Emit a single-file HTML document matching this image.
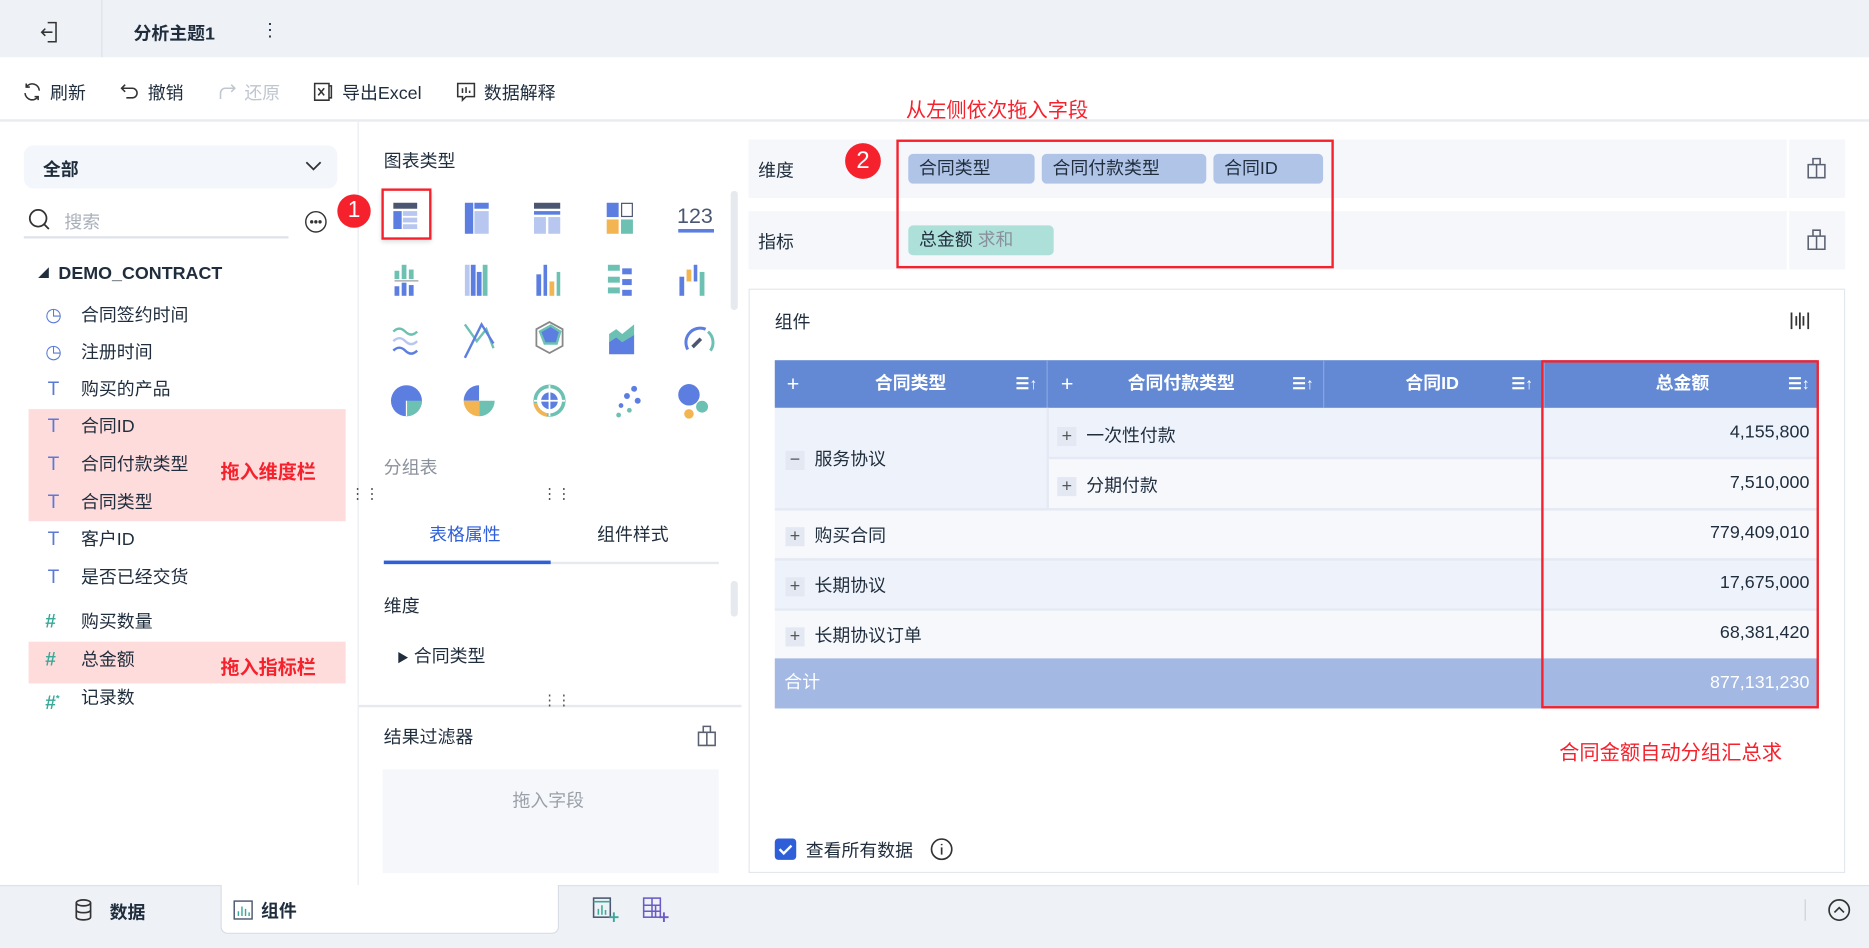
<!DOCTYPE html>
<html><head><meta charset="utf-8"><style>
html,body{margin:0;padding:0;width:1869px;height:947px;overflow:hidden;background:#fff}
#w{position:absolute;left:0;top:0;width:1568px;height:794px;transform:scale(1.19196,1.1927);transform-origin:0 0;font-family:"Liberation Sans","Noto Sans CJK SC",sans-serif;font-size:15px;color:#1f2d3d}
.a{position:absolute;white-space:nowrap}
.ic{position:absolute}
.red{color:#f5222d}
.chip{position:absolute;height:25px;line-height:25px;border-radius:4px;background:#b0c4e8;padding-left:9px;font-size:15px;box-sizing:border-box}
.row{position:absolute;left:650px;width:875px;height:42px;line-height:42px}
.pl{display:inline-block;width:16px;height:16px;line-height:15px;text-align:center;background:#e3e8f2;color:#555;font-size:15px;vertical-align:middle}
</style></head><body><div id="w">
<!-- top bar -->
<div class="a" style="left:0;top:0;width:1568px;height:48px;background:#eef1f6"></div>
<div class="a" style="left:85px;top:0;width:1px;height:48px;background:#dde2ea"></div>
<svg class="ic" style="left:33px;top:17px" width="18" height="20" viewBox="0 0 18 20" fill="none" stroke="#333" stroke-width="1.3"><path d="M7 2h7v16H7"/><path d="M11 10H2M5 7l-3 3 3 3"/></svg>
<div class="a" style="left:112px;top:17px;font-weight:bold;font-size:15px">分析主题1</div>
<div class="a" style="left:219px;top:16px">⋮</div>
<!-- toolbar -->
<div class="a" style="left:0;top:100px;width:1568px;height:2px;background:#e8ebf0"></div>
<svg class="ic" style="left:18px;top:68px" width="18" height="18" viewBox="0 0 18 18" fill="none" stroke="#333" stroke-width="1.3"><path d="M15 8A6 6 0 0 0 4 5M3 10a6 6 0 0 0 11 3"/><path d="M4 2v3h3M14 16v-3h-3"/></svg>
<div class="a" style="left:42px;top:67px">刷新</div>
<svg class="ic" style="left:100px;top:68px" width="18" height="18" viewBox="0 0 18 18" fill="none" stroke="#333" stroke-width="1.3"><path d="M5 3L2 6l3 3M2 6h9a4 4 0 0 1 0 8H6"/></svg>
<div class="a" style="left:124px;top:67px">撤销</div>
<svg class="ic" style="left:182px;top:68px" width="18" height="18" viewBox="0 0 18 18" fill="none" stroke="#c0c6cf" stroke-width="1.3"><path d="M12 3l3 3-3 3M15 6H7a4 4 0 0 0-4 4v5"/></svg>
<div class="a" style="left:205px;top:67px;color:#c0c6cf">还原</div>
<svg class="ic" style="left:262px;top:68px" width="18" height="18" viewBox="0 0 18 18" fill="none" stroke="#333" stroke-width="1.3"><path d="M2 2h12v14H2zM14 4h2v10h-2M5 6l5 6M10 6l-5 6"/></svg>
<div class="a" style="left:287px;top:67px">导出Excel</div>
<svg class="ic" style="left:382px;top:68px" width="18" height="18" viewBox="0 0 18 18" fill="none" stroke="#333" stroke-width="1.3"><path d="M2 2h14v11H9l-3 3v-3H2z M6 6v4M9 5v5M12 8v2"/></svg>
<div class="a" style="left:406px;top:67px">数据解释</div>
<div class="a red" style="left:760px;top:78px;font-size:17px">从左侧依次拖入字段</div>
<!-- left panel -->
<div class="a" style="left:300px;top:102px;width:1px;height:640px;background:#e8ebf0"></div>
<div class="a" style="left:20px;top:122px;width:263px;height:36px;border-radius:8px;background:#f3f6fb"></div>
<div class="a" style="left:36px;top:131px;font-weight:bold">全部</div>
<svg class="ic" style="left:255px;top:133px" width="16" height="12" viewBox="0 0 16 12" fill="none" stroke="#333" stroke-width="1.5"><path d="M2 3l6 6 6-6"/></svg>
<svg class="ic" style="left:23px;top:174px" width="20" height="20" viewBox="0 0 20 20" fill="none" stroke="#333" stroke-width="1.5"><circle cx="9" cy="9" r="7"/><path d="M14 14l4 4"/></svg>
<div class="a" style="left:54px;top:175px;color:#aab0ba">搜索</div>
<div class="a" style="left:20px;top:198px;width:222px;height:2px;background:#dfe3ea"></div>
<svg class="ic" style="left:255px;top:176px" width="20" height="20" viewBox="0 0 20 20" fill="none" stroke="#333" stroke-width="1.2"><circle cx="10" cy="10" r="8.5"/><circle cx="6.5" cy="10" r=".8" fill="#333"/><circle cx="10" cy="10" r=".8" fill="#333"/><circle cx="13.5" cy="10" r=".8" fill="#333"/></svg>
<div class="a" style="left:32px;top:222px;font-size:9px">◢</div>
<div class="a" style="left:49px;top:221px;font-weight:bold;font-size:15px">DEMO_CONTRACT</div>
<div class="a" style="left:24px;top:343px;width:266px;height:94px;background:#ffdcdc"></div>
<div class="a" style="left:24px;top:538px;width:266px;height:35px;background:#ffdcdc"></div>
<div class="a" style="left:38px;top:255px;color:#5a7ad6;line-height:20px;font-size:16px">
<div style="position:absolute;top:0">◷</div><div style="position:absolute;top:31px">◷</div>
<div style="position:absolute;top:62px;left:2px">T</div><div style="position:absolute;top:93px;left:2px">T</div><div style="position:absolute;top:125px;left:2px">T</div><div style="position:absolute;top:157px;left:2px">T</div><div style="position:absolute;top:188px;left:2px">T</div><div style="position:absolute;top:220px;left:2px">T</div>
<div style="position:absolute;top:257px;color:#3aa99a;font-weight:bold">#</div><div style="position:absolute;top:289px;color:#3aa99a;font-weight:bold">#</div><div style="position:absolute;top:321px;color:#3aa99a;font-weight:bold">#<sup style="font-size:8px">*</sup></div>
</div>
<div class="a" style="left:68px;top:255px;line-height:20px">
<div style="position:absolute;top:0">合同签约时间</div><div style="position:absolute;top:31px">注册时间</div><div style="position:absolute;top:62px">购买的产品</div><div style="position:absolute;top:93px">合同ID</div><div style="position:absolute;top:125px">合同付款类型</div><div style="position:absolute;top:157px">合同类型</div><div style="position:absolute;top:188px">客户ID</div><div style="position:absolute;top:220px">是否已经交货</div><div style="position:absolute;top:257px">购买数量</div><div style="position:absolute;top:289px">总金额</div><div style="position:absolute;top:321px">记录数</div>
</div>
<div class="a red" style="left:185px;top:382px;font-weight:bold;font-size:16px">拖入维度栏</div>
<div class="a red" style="left:185px;top:546px;font-weight:bold;font-size:16px">拖入指标栏</div>
<div class="a" style="left:294px;top:411px;font-size:12px;color:#555;line-height:6px">⋮⋮</div>
<!-- middle panel -->
<div class="a" style="left:322px;top:124px">图表类型</div>
<div class="a" style="left:320px;top:158px;width:38px;height:39px;border:2px solid #f5222d;box-shadow:0 2px 4px rgba(0,0,0,.15)"></div>
<div class="a" style="left:283px;top:163px;width:28px;height:28px;border-radius:50%;background:#f5222d;color:#fff;text-align:center;line-height:28px;font-size:19px">1</div>
<svg class="ic" style="left:322px;top:160px" width="290" height="200" viewBox="0 0 290 200">
<g transform="translate(8,10)"><rect width="20" height="5" fill="#4b5670"/><rect y="7" width="7" height="15" fill="#5b7ee0"/><rect x="8" y="7" width="12" height="4" fill="#b8c7f0"/><rect x="8" y="12.5" width="12" height="4" fill="#b8c7f0"/><rect x="8" y="18" width="12" height="4" fill="#b8c7f0"/></g>
<g transform="translate(68,10)"><rect width="7" height="26" fill="#5b7ee0"/><rect x="8" width="12" height="5" fill="#5b7ee0"/><rect x="8" y="7" width="12" height="19" fill="#b8c7f0"/></g>
<g transform="translate(126,10)"><rect width="22" height="5" fill="#4b5670"/><rect y="7" width="22" height="3" fill="#5b7ee0"/><rect y="12" width="10" height="14" fill="#b8c7f0"/><rect x="12" y="12" width="10" height="14" fill="#b8c7f0"/></g>
<g transform="translate(187,10)"><rect width="10" height="12" fill="#5b7ee0"/><rect x="12.5" y=".5" width="9" height="11" fill="none" stroke="#4b5670"/><rect y="14" width="10" height="12" fill="#f2b552"/><rect x="12" y="14" width="10" height="12" fill="#6cc1b2"/></g>
<text x="246" y="27" font-size="18" fill="#4b5670" font-family="Liberation Sans">123</text><rect x="247" y="32" width="30" height="3" fill="#5b7ee0"/>
<g transform="translate(9,62)" fill="#5b7ee0"><rect x="6" width="4" height="12" fill="#6cc1b2"/><rect y="5" width="4" height="7" fill="#6cc1b2"/><rect x="12" y="4" width="4" height="8" fill="#6cc1b2"/><rect y="13" width="20" height="1" fill="#999"/><rect y="18" width="4" height="8"/><rect x="6" y="15" width="4" height="11"/><rect x="12" y="17" width="4" height="9"/></g>
<g transform="translate(68,62)"><rect width="4" height="26" fill="#b8c7f0"/><rect x="5" width="4" height="26" fill="#5b7ee0"/><rect x="10" y="6" width="4" height="20" fill="#5b7ee0"/><rect x="15" width="4" height="26" fill="#6cc1b2"/></g>
<g transform="translate(128,62)"><rect y="8" width="4" height="18" fill="#5b7ee0"/><rect x="6" width="3" height="26" fill="#5b7ee0"/><rect x="11" y="14" width="4" height="12" fill="#f2b552"/><rect x="17" y="6" width="3" height="20" fill="#6cc1b2"/></g>
<g transform="translate(188,62)"><rect width="10" height="5" fill="#6cc1b2"/><rect x="12" y="3" width="8" height="5" fill="#5b7ee0"/><rect y="10" width="10" height="5" fill="#6cc1b2"/><rect x="12" y="12" width="8" height="5" fill="#5b7ee0"/><rect y="19" width="10" height="5" fill="#6cc1b2"/><rect x="12" y="21" width="8" height="5" fill="#5b7ee0"/></g>
<g transform="translate(248,62)"><rect y="10" width="4" height="16" fill="#5b7ee0"/><rect x="6" y="4" width="4" height="10" fill="#f2b552"/><rect x="12" width="3" height="14" fill="#5b7ee0"/><rect x="17" y="6" width="4" height="20" fill="#6cc1b2"/></g>
<g fill="none" stroke-width="2"><path d="M8 118q5-5 10 0t10 0" stroke="#6cc1b2"/><path d="M8 126q5-5 10 0t10 0" stroke="#b8c7f0"/><path d="M8 134q5-5 10 0t10 0" stroke="#5b7ee0"/>
<path d="M68 112l10 14 8-10 6 16" stroke="#6cc1b2"/><path d="M68 140l14-28 10 16" stroke="#5b7ee0"/>
<path d="M139 110l11 6v14l-11 6-11-6v-14z" stroke="#888" stroke-width="1.5"/><path d="M131 118l9-5 8 5-3 10h-10z" fill="#5b7ee0" stroke="#6cc1b2"/>
<path d="M189 120l6-4 5 4 10-8v10l-10 6-6-4-5 4z" fill="#6cc1b2" stroke="none"/><path d="M189 137v-10l6-4 5 4 10-6v16z" fill="#5b7ee0" stroke="none"/>
<path d="M255 133a12 12 0 0 1 15-17" stroke="#5b7ee0" stroke-width="2.5"/><path d="M272 118a12 12 0 0 1 2 16" stroke="#6cc1b2" stroke-width="2.5"/><path d="M259 131l7-7" stroke="#4b5670" stroke-width="3"/></g>
<circle cx="19" cy="176" r="13" fill="#5b7ee0"/><path d="M19 176h13a13 13 0 0 1-13 13z" fill="#6cc1b2"/><path d="M19 176v13" stroke="#fff"/>
<path d="M80 176v-13a13 13 0 0 0-13 13z" fill="#5b7ee0"/><path d="M80 176h13a13 13 0 0 0-13-13z" fill="#fff"/><path d="M80 176h13a13 13 0 0 1-13 13z" fill="#6cc1b2"/><path d="M80 176v13a13 13 0 0 1-13-13z" fill="#f2b552"/>
<circle cx="139" cy="176" r="12" fill="none" stroke="#6cc1b2" stroke-width="3"/><circle cx="139" cy="176" r="7" fill="#5b7ee0"/><path d="M126 176h26M139 163v26" stroke="#fff" stroke-width="1.5"/><path d="M127 178a12 12 0 0 0 10 10" stroke="#f2b552" stroke-width="3" fill="none"/>
<g fill="#5b7ee0"><circle cx="210" cy="166" r="2.5"/><circle cx="204" cy="172" r="2.5"/><circle cx="213" cy="176" r="2.5"/><circle cx="199" cy="180" r="2"/><circle cx="206" cy="184" r="2" fill="#6cc1b2"/><circle cx="197" cy="188" r="2" fill="#6cc1b2"/></g>
<circle cx="256" cy="171" r="9" fill="#5b7ee0"/><circle cx="267" cy="181" r="5" fill="#6cc1b2"/><circle cx="256" cy="187" r="4" fill="#f2b552"/>
</svg>
<div class="a" style="left:613px;top:160px;width:6px;height:100px;border-radius:3px;background:#e6e9ee"></div>
<div class="a" style="left:322px;top:381px;color:#8a919c">分组表</div>
<div class="a" style="left:455px;top:411px;font-size:12px;color:#555;line-height:6px">⋮⋮</div>
<div class="a" style="left:322px;top:471px;width:281px;height:2px;background:#e6e9ee"></div>
<div class="a" style="left:322px;top:470px;width:140px;height:3px;background:#2f5fd8"></div>
<div class="a" style="left:360px;top:437px;color:#2f5fd8">表格属性</div>
<div class="a" style="left:501px;top:437px">组件样式</div>
<div class="a" style="left:613px;top:487px;width:6px;height:30px;border-radius:3px;background:#e6e9ee"></div>
<div class="a" style="left:322px;top:497px">维度</div>
<div class="a" style="left:333px;top:539px"><span style="font-size:10px">▶</span> 合同类型</div>
<div class="a" style="left:301px;top:582px;width:321px;height:10px;background:#fff;overflow:hidden"></div>
<div class="a" style="left:301px;top:591px;width:321px;height:2px;background:#e6e9ee"></div>
<div class="a" style="left:455px;top:584px;font-size:12px;color:#555;line-height:6px">⋮⋮</div>
<div class="a" style="left:322px;top:607px">结果过滤器</div>
<svg class="ic" style="left:584px;top:607px" width="18" height="20" viewBox="0 0 18 20" fill="none" stroke="#5a6170" stroke-width="1.3"><path d="M6 2h6v5H6zM2 7h14v11H2zM9 7v11"/></svg>
<div class="a" style="left:321px;top:645px;width:282px;height:87px;background:#f5f7fb"></div>
<div class="a" style="left:430px;top:660px;color:#9aa0a9">拖入字段</div>
<!-- right area -->
<div class="a" style="left:628px;top:117px;width:920px;height:49px;background:#f5f7fb"></div>
<div class="a" style="left:628px;top:177px;width:920px;height:49px;background:#f5f7fb"></div>
<div class="a" style="left:1499px;top:117px;width:2px;height:49px;background:#fff"></div>
<div class="a" style="left:1499px;top:177px;width:2px;height:49px;background:#fff"></div>
<svg class="ic" style="left:1515px;top:131px" width="18" height="20" viewBox="0 0 18 20" fill="none" stroke="#5a6170" stroke-width="1.3"><path d="M6 2h6v5H6zM2 7h14v11H2zM9 7v11"/></svg>
<svg class="ic" style="left:1515px;top:191px" width="18" height="20" viewBox="0 0 18 20" fill="none" stroke="#5a6170" stroke-width="1.3"><path d="M6 2h6v5H6zM2 7h14v11H2zM9 7v11"/></svg>
<div class="a" style="left:636px;top:132px">维度</div>
<div class="a" style="left:636px;top:192px">指标</div>
<div class="chip" style="left:762px;top:129px;width:106px">合同类型</div>
<div class="chip" style="left:874px;top:129px;width:138px">合同付款类型</div>
<div class="chip" style="left:1018px;top:129px;width:92px">合同ID</div>
<div class="chip" style="left:762px;top:189px;width:122px;background:#aee0da">总金额 <span style="color:#8a919c">求和</span></div>
<div class="a" style="left:752px;top:117px;width:363px;height:104px;border:2px solid #f5222d"></div>
<div class="a" style="left:709px;top:120px;width:30px;height:30px;border-radius:50%;background:#f5222d;color:#fff;text-align:center;line-height:30px;font-size:20px">2</div>
<div class="a" style="left:628px;top:242px;width:918px;height:488px;border:1px solid #e3e7ee"></div>
<div class="a" style="left:650px;top:259px">组件</div>
<svg class="ic" style="left:1501px;top:260px" width="18" height="18" viewBox="0 0 18 18" stroke="#333" stroke-width="1.5"><path d="M2 2v14M6 5v8M9 2v14M12 5v8M16 2v14"/></svg>
<!-- table -->
<div class="a" style="left:650px;top:302px;width:875px;height:40px;background:#6489d4;color:#fff;font-weight:bold;line-height:40px">
<span class="a" style="left:10px;font-weight:normal;font-size:18px">+</span><span class="a" style="left:84px">合同类型</span><span class="a" style="left:202px;font-size:13px">☰↑</span>
<span class="a" style="left:228px;top:0;width:1px;height:40px;background:#8aa5e0"></span>
<span class="a" style="left:240px;font-weight:normal;font-size:18px">+</span><span class="a" style="left:296px">合同付款类型</span><span class="a" style="left:434px;font-size:13px">☰↑</span>
<span class="a" style="left:460px;top:0;width:1px;height:40px;background:#8aa5e0"></span>
<span class="a" style="left:529px">合同ID</span><span class="a" style="left:618px;font-size:13px">☰↑</span>
<span class="a" style="left:645px;top:0;width:1px;height:40px;background:#8aa5e0"></span>
<span class="a" style="left:739px">总金额</span><span class="a" style="left:850px;font-size:13px">☰↕</span>
</div>
<div class="row" style="top:342px;background:#eef2fa"></div>
<div class="row" style="top:384px;background:#f6f8fc;height:42px"></div>
<div class="a" style="left:650px;top:342px;width:228px;height:84px;background:#eef2fa;border-right:2px solid #e4e9f3"></div>
<div class="a" style="left:878px;top:383px;width:647px;height:2px;background:#e4e9f3"></div>
<div class="a" style="left:659px;top:374px"><span class="pl">−</span>&nbsp;&nbsp;服务协议</div>
<div class="a" style="left:887px;top:354px"><span class="pl">+</span>&nbsp;&nbsp;一次性付款</div>
<div class="a" style="left:887px;top:396px"><span class="pl">+</span>&nbsp;&nbsp;分期付款</div>
<div class="a" style="left:1440px;top:354px;width:78px;text-align:right">4,155,800</div>
<div class="a" style="left:1440px;top:396px;width:78px;text-align:right">7,510,000</div>
<div class="row" style="top:426px;background:#f6f8fc;border-top:2px solid #e4e9f3;box-sizing:border-box"></div>
<div class="row" style="top:468px;background:#eef2fa;border-top:2px solid #e4e9f3;box-sizing:border-box"></div>
<div class="row" style="top:510px;background:#f6f8fc;border-top:2px solid #e4e9f3;box-sizing:border-box"></div>
<div class="a" style="left:659px;top:438px"><span class="pl">+</span>&nbsp;&nbsp;购买合同</div>
<div class="a" style="left:659px;top:480px"><span class="pl">+</span>&nbsp;&nbsp;长期协议</div>
<div class="a" style="left:659px;top:522px"><span class="pl">+</span>&nbsp;&nbsp;长期协议订单</div>
<div class="a" style="left:1400px;top:438px;width:118px;text-align:right">779,409,010</div>
<div class="a" style="left:1400px;top:480px;width:118px;text-align:right">17,675,000</div>
<div class="a" style="left:1400px;top:522px;width:118px;text-align:right">68,381,420</div>
<div class="row" style="top:552px;background:#a3b8e3;color:#fff"><span class="a" style="left:8px">合计</span><span class="a" style="right:7px">877,131,230</span></div>
<div class="a" style="left:1293px;top:302px;width:229px;height:288px;border:2px solid #f5222d"></div>
<div class="a red" style="left:1308px;top:617px;font-size:17px">合同金额自动分组汇总求</div>
<div class="a" style="left:650px;top:703px;width:18px;height:18px;border-radius:3px;background:#2f5fd8"></div>
<svg class="ic" style="left:650px;top:703px" width="18" height="18" viewBox="0 0 18 18" fill="none" stroke="#fff" stroke-width="2"><path d="M4 9l3.5 3.5L14 6"/></svg>
<div class="a" style="left:676px;top:702px">查看所有数据</div>
<svg class="ic" style="left:780px;top:702px" width="20" height="20" viewBox="0 0 20 20" fill="none" stroke="#333" stroke-width="1.4"><circle cx="10" cy="10" r="8.5"/><path d="M10 8.5v6M10 5.5v1.2"/></svg>
<!-- bottom bar -->
<div class="a" style="left:0;top:742px;width:1568px;height:52px;background:#eef1f6;border-top:1px solid #dde2ea"></div>
<div class="a" style="left:185px;top:742px;width:282px;height:40px;background:#fff;border:1px solid #d8dde6;border-top:none;border-radius:0 0 6px 6px"></div>
<svg class="ic" style="left:62px;top:753px" width="16" height="20" viewBox="0 0 16 20" fill="none" stroke="#333" stroke-width="1.4"><ellipse cx="8" cy="4" rx="6" ry="2.5"/><path d="M2 4v12c0 3 12 3 12 0V4M2 10c0 3 12 3 12 0"/></svg>
<div class="a" style="left:92px;top:754px;font-weight:bold">数据</div>
<svg class="ic" style="left:195px;top:754px" width="18" height="18" viewBox="0 0 18 18" fill="none" stroke="#4b5670" stroke-width="1.2"><rect x="1.5" y="1.5" width="15" height="15"/><path d="M5 14v-4M8 14V6M11 14v-6M14 14v-3" stroke="#3aa99a"/></svg>
<div class="a" style="left:219px;top:753px;font-weight:bold">组件</div>
<svg class="ic" style="left:497px;top:752px" width="22" height="22" viewBox="0 0 22 22" fill="none" stroke="#4b5670" stroke-width="1.3"><rect x="1" y="1" width="14" height="16"/><path d="M1 4h14M5 15v-5M8 15V7M11 15v-4" stroke="#3aa99a"/><path d="M18 13v8M14 17h8" stroke="#3aa99a" stroke-width="1.6"/></svg>
<svg class="ic" style="left:539px;top:752px" width="22" height="22" viewBox="0 0 22 22" fill="none" stroke="#6b5bc8" stroke-width="1.3"><rect x="1" y="1" width="14" height="16"/><path d="M1 7h14M1 12h14M8 1v16M11 7v10"/><path d="M18 13v8M14 17h8" stroke-width="1.6"/></svg>
<div class="a" style="left:1514px;top:754px;width:1px;height:18px;background:#ccd2dc"></div>
<svg class="ic" style="left:1533px;top:753px" width="20" height="20" viewBox="0 0 20 20" fill="none" stroke="#333" stroke-width="1.4"><circle cx="10" cy="10" r="8.5"/><path d="M6 12l4-4 4 4"/></svg>
</div></body></html>
